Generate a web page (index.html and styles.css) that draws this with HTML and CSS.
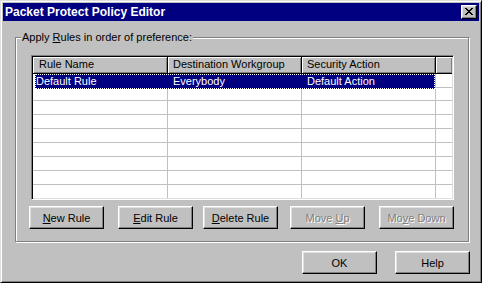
FILE: index.html
```html
<!DOCTYPE html>
<html lang="en">
<head>
<meta charset="UTF-8" />
<title>Packet Protect Policy Editor</title>
<link rel="stylesheet" href="styles.css">
</head>
<body>
<div class="window">
  <div class="titlebar">
    <span class="title">Packet Protect Policy Editor</span>
    <button class="close">
      <svg width="8" height="7" viewBox="0 0 8 7" shape-rendering="crispEdges">
        <path d="M0 0h2v1h-2z M6 0h2v1h-2z M1 1h2v1h-2z M5 1h2v1h-2z M2 2h4v1h-4z M3 3h2v1h-2z M2 4h4v1h-4z M1 5h2v1h-2z M5 5h2v1h-2z M0 6h2v1h-2z M6 6h2v1h-2z" fill="#000"/>
      </svg>
    </button>
  </div>
  <div class="content">
    <div class="group">
      <span class="group-label">Apply <u>R</u>ules in order of preference:</span>
      <div class="list">
        <div class="list-head">
          <div class="hcell c1">Rule Name</div>
          <div class="hcell c2">Destination Workgroup</div>
          <div class="hcell c3">Security Action</div>
          <div class="hcell c4"></div>
        </div>
        <div class="row selected">
          <div class="sel">
            <span class="sc1">Default Rule</span>
            <span class="sc2">Everybody</span>
            <span class="sc3">Default Action</span>
          </div>
          <div class="sel-tail"></div>
        </div>
        <div class="row short"><div class="cell c1"></div><div class="cell c2"></div><div class="cell c3"></div><div class="cell c4"></div></div>
        <div class="row"><div class="cell c1"></div><div class="cell c2"></div><div class="cell c3"></div><div class="cell c4"></div></div>
        <div class="row"><div class="cell c1"></div><div class="cell c2"></div><div class="cell c3"></div><div class="cell c4"></div></div>
        <div class="row"><div class="cell c1"></div><div class="cell c2"></div><div class="cell c3"></div><div class="cell c4"></div></div>
        <div class="row"><div class="cell c1"></div><div class="cell c2"></div><div class="cell c3"></div><div class="cell c4"></div></div>
        <div class="row"><div class="cell c1"></div><div class="cell c2"></div><div class="cell c3"></div><div class="cell c4"></div></div>
        <div class="row"><div class="cell c1"></div><div class="cell c2"></div><div class="cell c3"></div><div class="cell c4"></div></div>
        <div class="row last"><div class="cell c1"></div><div class="cell c2"></div><div class="cell c3"></div><div class="cell c4"></div></div>
      </div>
      <div class="btn-row">
        <button class="btn"><u>N</u>ew Rule</button>
        <button class="btn gap-14"><u>E</u>dit Rule</button>
        <button class="btn gap-10"><u>D</u>elete Rule</button>
        <button class="btn gap-12" disabled>Move <u>U</u>p</button>
        <button class="btn gap-14" disabled>Mo<u>v</u>e Down</button>
      </div>
    </div>
    <div class="dialog-btns">
      <button class="btn">OK</button>
      <button class="btn">Help</button>
    </div>
  </div>
</div>
</body>
</html>
```
FILE: styles.css
```css
body {
  margin: 0;
  font-family: 'Liberation Sans', Arial, sans-serif;
  font-size: 11px;
  background: #c0c0c0;
  color: #000;
}

.window {
  box-sizing: border-box;
  width: 482px;
  height: 283px;
  padding: 2px;
  background: #c0c0c0;
  border: 1px solid;
  border-color: #dfdfdf #000 #000 #dfdfdf;
  box-shadow: inset 1px 1px #fff, inset -1px -1px #808080;
}

.titlebar {
  display: flex;
  align-items: center;
  justify-content: space-between;
  height: 18px;
  padding: 0 2px 0 2px;
  background: #000080;
}

.title {
  color: #fff;
  font-weight: bold;
  font-size: 12px;
}

.close {
  display: flex;
  align-items: center;
  justify-content: center;
  box-sizing: border-box;
  width: 16px;
  height: 14px;
  padding: 0 0 1px 0;
  background: #c0c0c0;
  border: 1px solid;
  border-color: #fff #000 #000 #fff;
  box-shadow: inset -1px -1px #808080, inset 1px 1px #dfdfdf;
}

.content {
  padding: 16px 0 0 12px;
}

.group {
  display: flex;
  flex-direction: column;
  height: 205px;
  box-sizing: border-box;
  margin-right: 10px;
  padding: 0 14px 12px 15px;
  border: 1px solid #808080;
  box-shadow: inset 1px 1px #fff, 1px 1px #fff;
}

.group-label {
  align-self: flex-start;
  margin: -7px 0 0 -10px;
  padding: 0 1px;
  line-height: 13px;
  background: #c0c0c0;
}

.list {
  box-sizing: border-box;
  width: 423px;
  height: 145px;
  margin-top: 11px;
  padding: 1px;
  background: #fff;
  border: 1px solid;
  border-color: #808080 #fff #fff #808080;
  box-shadow: inset 1px 1px #000, inset -1px -1px #dfdfdf;
}

.list-head {
  display: flex;
  height: 17px;
}

.hcell {
  box-sizing: border-box;
  height: 17px;
  padding-left: 5px;
  line-height: 15px;
  background: #c0c0c0;
  border-right: 1px solid #000;
  border-bottom: 1px solid #000;
  box-shadow: inset 1px 1px #fff, inset -1px -1px #808080;
  white-space: nowrap;
}

.hcell.c1 { padding-left: 6px; }
.hcell.c4 { border-right: none; }

.c1 { width: 135px; }
.c2 { width: 134px; }
.c3 { width: 134px; }
.c4 { flex: 1; }

.row {
  display: flex;
  height: 14px;
}

.row.short { height: 12px; }
.row.last { height: 13px; }

.cell {
  box-sizing: border-box;
  border-right: 1px solid #c0c0c0;
  border-bottom: 1px solid #c0c0c0;
}

.cell.c4 { border-right: none; }
.row.last .cell { border-bottom: none; }

.row.selected {
  height: 15px;
}

.sel {
  display: flex;
  box-sizing: border-box;
  width: 400px;
  margin-left: 2px;
  line-height: 13px;
  color: #fff;
  background: #000080;
  border: 1px dotted #fff;
  white-space: nowrap;
}

.sc1 { width: 132px; }
.sc2 { width: 134px; box-sizing: border-box; padding-left: 5px; }
.sc3 { flex: 1; padding-left: 5px; }

.sel-tail {
  flex: 1;
  height: 13px;
  border-bottom: 1px solid #c0c0c0;
  border-left: 1px solid #c0c0c0;
}

.btn-row {
  display: flex;
  margin: 6px 0 0 -2px;
}

.btn {
  box-sizing: border-box;
  width: 75px;
  height: 23px;
  padding: 0;
  font-family: inherit;
  font-size: 11px;
  color: #000;
  background: #c0c0c0;
  border: 1px solid;
  border-color: #fff #000 #000 #fff;
  box-shadow: inset -1px -1px #808080, inset 1px 1px #dfdfdf;
}

.btn:disabled {
  color: #808080;
  text-shadow: 1px 1px 0 #fff;
}

.gap-14 { margin-left: 14px; }
.gap-10 { margin-left: 10px; }
.gap-12 { margin-left: 12px; }

.dialog-btns {
  display: flex;
  justify-content: flex-end;
  gap: 18px;
  margin-top: 9px;
  padding-right: 9px;
}
```
